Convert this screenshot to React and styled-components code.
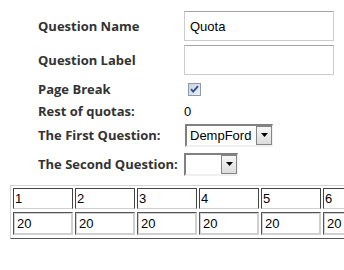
import React from "react";
import styled, { createGlobalStyle } from "styled-components";

const Global = createGlobalStyle`
  html, body { margin: 0; padding: 0; background: #fff; overflow: hidden; }
  body { font-family: "Liberation Sans", Arial, sans-serif; }
`;

const Page = styled.div`
  width: 344px;
  height: 270px;
  overflow: hidden;
  background: #fff;
`;

const Form = styled.div`
  display: flex;
  flex-direction: column;
  padding: 9px 0 0 38px;
`;

const Row = styled.div`
  display: flex;
  align-items: center;
  height: ${(p) => p.$h}px;
`;

const Label = styled.div`
  width: 146px;
  flex: none;
  font-family: "Open Sans", "DejaVu Sans", sans-serif;
  font-weight: 700;
  font-size: 13px;
  color: #333;
  white-space: nowrap;
`;

const TextBox = styled.div`
  box-sizing: border-box;
  width: 150px;
  height: 30px;
  border: 1px solid #cccccc;
  border-top-color: #a3a3a3;
  padding: 0 5px;
  display: flex;
  align-items: center;
  font-family: "Liberation Sans", Arial, sans-serif;
  font-size: 13px;
  color: #000;
`;

const Value = styled.div`
  font-family: "Liberation Sans", Arial, sans-serif;
  font-size: 13px;
  color: #000;
`;

const CheckWrap = styled.div`
  margin-left: 4px;
  width: 13px;
  height: 13px;
  display: flex;
`;

const Select = styled.div`
  box-sizing: border-box;
  width: ${(p) => p.$w}px;
  height: 23px;
  margin-left: ${(p) => p.$ml || 0}px;
  border-style: solid;
  border-width: 2px 1px 2px 2px;
  border-color: #808080 #f0f0f0 #f0f0f0 #808080;
  display: flex;
  align-items: stretch;
  background: #fff;
`;

const SelectText = styled.div`
  flex: 1;
  padding-left: 3px;
  display: flex;
  align-items: center;
  font-family: "Liberation Sans", Arial, sans-serif;
  font-size: 13px;
  color: #000;
  overflow: hidden;
  white-space: nowrap;
`;

const SelectButton = styled.div`
  box-sizing: border-box;
  width: 16px;
  flex: none;
  border: 1px solid #858585;
  background: linear-gradient(#f7f7f7, #dcdcdc);
  display: flex;
  align-items: center;
  justify-content: center;
`;

const Grid = styled.div`
  display: inline-grid;
  width: max-content;
  grid-template-columns: repeat(6, 60px);
  grid-template-rows: 21px 23px;
  column-gap: 2px;
  row-gap: 3px;
  padding: 2px 2px 3px 2px;
  margin: 6px 0 0 10px;
  border: 1px solid;
  border-color: #d4d4d4 #555 #555 #d4d4d4;
`;

const HeadCell = styled.div`
  box-sizing: border-box;
  border: 1px solid #444;
  border-bottom-color: #cfcfcf;
  padding-left: 1px;
  display: flex;
  align-items: center;
  font-family: "Liberation Sans", Arial, sans-serif;
  font-size: 13px;
  color: #000;
`;

const ValueCell = styled.div`
  box-sizing: border-box;
  border: 1px solid;
  border-color: #555 #cfcfcf #cfcfcf #555;
  box-shadow: inset 0 0 0 1px #d0d0d0;
  padding-left: 3px;
  display: flex;
  align-items: center;
  font-family: "Liberation Sans", Arial, sans-serif;
  font-size: 13px;
  color: #000;
`;

const Arrow = () => (
  <svg width="7" height="4" viewBox="0 0 7 4">
    <path d="M0 0H7L3.5 4Z" fill="#000" />
  </svg>
);

const Checkbox = () => (
  <svg width="13" height="13" viewBox="0 0 13 13">
    <defs>
      <linearGradient id="cbg" x1="0" y1="0" x2="1" y2="1">
        <stop offset="0" stopColor="#c9d1dc" />
        <stop offset="1" stopColor="#eef1f5" />
      </linearGradient>
    </defs>
    <rect x="0.5" y="0.5" width="12" height="12" fill="url(#cbg)" stroke="#8d9aab" />
    <path d="M3 6.2L5.2 8.6L10 3.2" fill="none" stroke="#2f4f8f" strokeWidth="1.8" />
  </svg>
);

const cols = ["1", "2", "3", "4", "5", "6"];

export default function App() {
  return (
    <Page>
      <Global />
      <Form>
        <Row $h={34}>
          <Label>Question Name</Label>
          <TextBox>Quota</TextBox>
        </Row>
        <Row $h={34}>
          <Label>Question Label</Label>
          <TextBox />
        </Row>
        <Row $h={24}>
          <Label>Page Break</Label>
          <CheckWrap>
            <Checkbox />
          </CheckWrap>
        </Row>
        <Row $h={20}>
          <Label>Rest of quotas:</Label>
          <Value>0</Value>
        </Row>
        <Row $h={28}>
          <Label>The First Question:</Label>
          <Select $w={88} $ml={1}>
            <SelectText>DempFord</SelectText>
            <SelectButton>
              <Arrow />
            </SelectButton>
          </Select>
        </Row>
        <Row $h={30}>
          <Label>The Second Question:</Label>
          <Select $w={54}>
            <SelectText />
            <SelectButton>
              <Arrow />
            </SelectButton>
          </Select>
        </Row>
      </Form>
      <Grid>
        {cols.map((c) => (
          <HeadCell key={"h" + c}>{c}</HeadCell>
        ))}
        {cols.map((c) => (
          <ValueCell key={"v" + c}>20</ValueCell>
        ))}
      </Grid>
    </Page>
  );
}
